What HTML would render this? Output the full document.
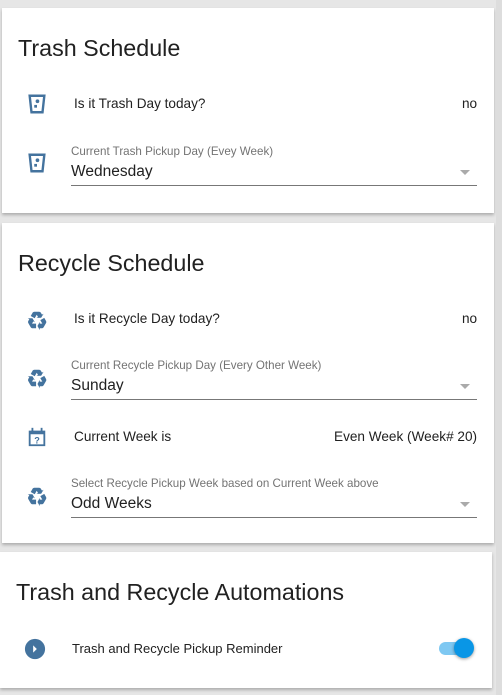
<!DOCTYPE html><html><head><style>
body{margin:0;width:502px;height:695px;background:#e6e6e6;font-family:"Liberation Sans",sans-serif;position:relative;overflow:hidden}
.card{position:absolute;background:#fff;box-shadow:0 2px 3px rgba(0,0,0,.25)}
.h{position:absolute;font-size:23.3px;color:#212121}
.t{position:absolute;font-size:13.6px;color:#212121}
.lab{position:absolute;font-size:11.6px;color:#737373}
.val{position:absolute;font-size:15.5px;color:#212121}
.ul{position:absolute;height:1px;background:#777;left:71px;width:406px}
.arr{position:absolute;left:460px;width:0;height:0;border-left:5px solid transparent;border-right:5px solid transparent;border-top:5px solid #aaa}
svg.i{position:absolute;width:22px;height:22px}
</style></head><body>
<div class="card" style="left:2px;top:8px;width:492px;height:205px"></div>
<div class="card" style="left:2px;top:223px;width:492px;height:320px"></div>
<div class="card" style="left:0;top:552px;width:492px;height:136px"></div>
<div style="position:absolute;left:496px;top:0;width:6px;height:695px;background:#ddd"></div>

<div class="h" style="left:18px;top:35px">Trash Schedule</div>
<svg class="i" style="left:26px;top:93px" viewBox="0 0 24 24"><path d="M4 3h16l-2 18H6z" fill="none" stroke="#44739e" stroke-width="2.6"/><circle cx="12.5" cy="9" r="2" fill="#44739e"/><rect x="9" y="13" width="3" height="3" fill="#44739e"/></svg>
<div class="t" style="left:74px;top:96px">Is it Trash Day today?</div>
<div class="t" style="left:462px;top:96px">no</div>
<svg class="i" style="left:26px;top:152px" viewBox="0 0 24 24"><path d="M4 3h16l-2 18H6z" fill="none" stroke="#44739e" stroke-width="2.6"/><circle cx="12.5" cy="9" r="2" fill="#44739e"/><rect x="9" y="13" width="3" height="3" fill="#44739e"/></svg>
<div class="lab" style="left:71px;top:145px">Current Trash Pickup Day (Evey Week)</div>
<div class="val" style="left:71px;top:163px">Wednesday</div>
<div class="arr" style="top:170px"></div>
<div class="ul" style="top:185px"></div>

<div class="h" style="left:18px;top:250px">Recycle Schedule</div>
<svg class="i" style="left:26px;top:309px" viewBox="0 0 24 24"><path id="rc" fill="#44739e" d="M21.82,15.42L19.32,19.75C18.83,20.61 17.92,21.06 17,21H15V23L12.5,18.5L15,14V16H17.82L15.6,12.15L19.93,9.65L21.73,12.77C22.25,13.54 22.32,14.57 21.82,15.42M9.21,3.06H14.21C15.19,3.06 16.04,3.63 16.45,4.45L17.45,6.19L19.18,5.19L16.54,9.6L11.39,9.69L13.12,8.69L11.71,6.24L9.5,10.09L5.16,7.59L6.96,4.47C7.37,3.64 8.22,3.06 9.21,3.06M5.05,19.76L2.55,15.43C2.06,14.58 2.13,13.56 2.64,12.79L3.640,11.06L1.91,10.06L7.05,10.14L9.7,14.56L7.97,13.56L6.56,16H11V21H7.4C6.47,21.07 5.55,20.61 5.05,19.76Z"/></svg>
<div class="t" style="left:74px;top:311px">Is it Recycle Day today?</div>
<div class="t" style="left:462px;top:311px">no</div>
<svg class="i" style="left:26px;top:367px" viewBox="0 0 24 24"><use href="#rc"/></svg>
<div class="lab" style="left:71px;top:359px">Current Recycle Pickup Day (Every Other Week)</div>
<div class="val" style="left:71px;top:377px">Sunday</div>
<div class="arr" style="top:384px"></div>
<div class="ul" style="top:399px"></div>
<svg class="i" style="left:26px;top:426px" viewBox="0 0 24 24"><path d="M3 5h18v17H3z" fill="#44739e"/><rect x="5" y="9" width="14" height="11" fill="#fff"/><rect x="6" y="2" width="2" height="4" fill="#44739e"/><rect x="16" y="2" width="2" height="4" fill="#44739e"/><text x="12" y="19" font-size="10" font-weight="bold" text-anchor="middle" fill="#44739e" font-family="Liberation Sans">?</text></svg>
<div class="t" style="left:74px;top:429px">Current Week is</div>
<div class="t" style="left:334px;top:429px">Even Week (Week# 20)</div>
<svg class="i" style="left:26px;top:485px" viewBox="0 0 24 24"><use href="#rc"/></svg>
<div class="lab" style="left:71px;top:477px">Select Recycle Pickup Week based on Current Week above</div>
<div class="val" style="left:71px;top:495px">Odd Weeks</div>
<div class="arr" style="top:502px"></div>
<div class="ul" style="top:517px"></div>

<div class="h" style="left:16px;top:579px">Trash and Recycle Automations</div>
<svg class="i" style="left:24px;top:638px" viewBox="0 0 24 24"><circle cx="12" cy="12" r="11" fill="#44739e"/><path d="M10 8l4 4-4 4z" fill="#fff"/></svg>
<div class="t" style="left:72px;top:641px;font-size:13px">Trash and Recycle Pickup Reminder</div>
<div style="position:absolute;left:439px;top:642px;width:34px;height:13px;border-radius:7px;background:#7ec8f2"></div>
<div style="position:absolute;left:454px;top:638px;width:20px;height:20px;border-radius:50%;background:#0996e6;box-shadow:0 1px 3px rgba(0,0,0,.4)"></div>
</body></html>
